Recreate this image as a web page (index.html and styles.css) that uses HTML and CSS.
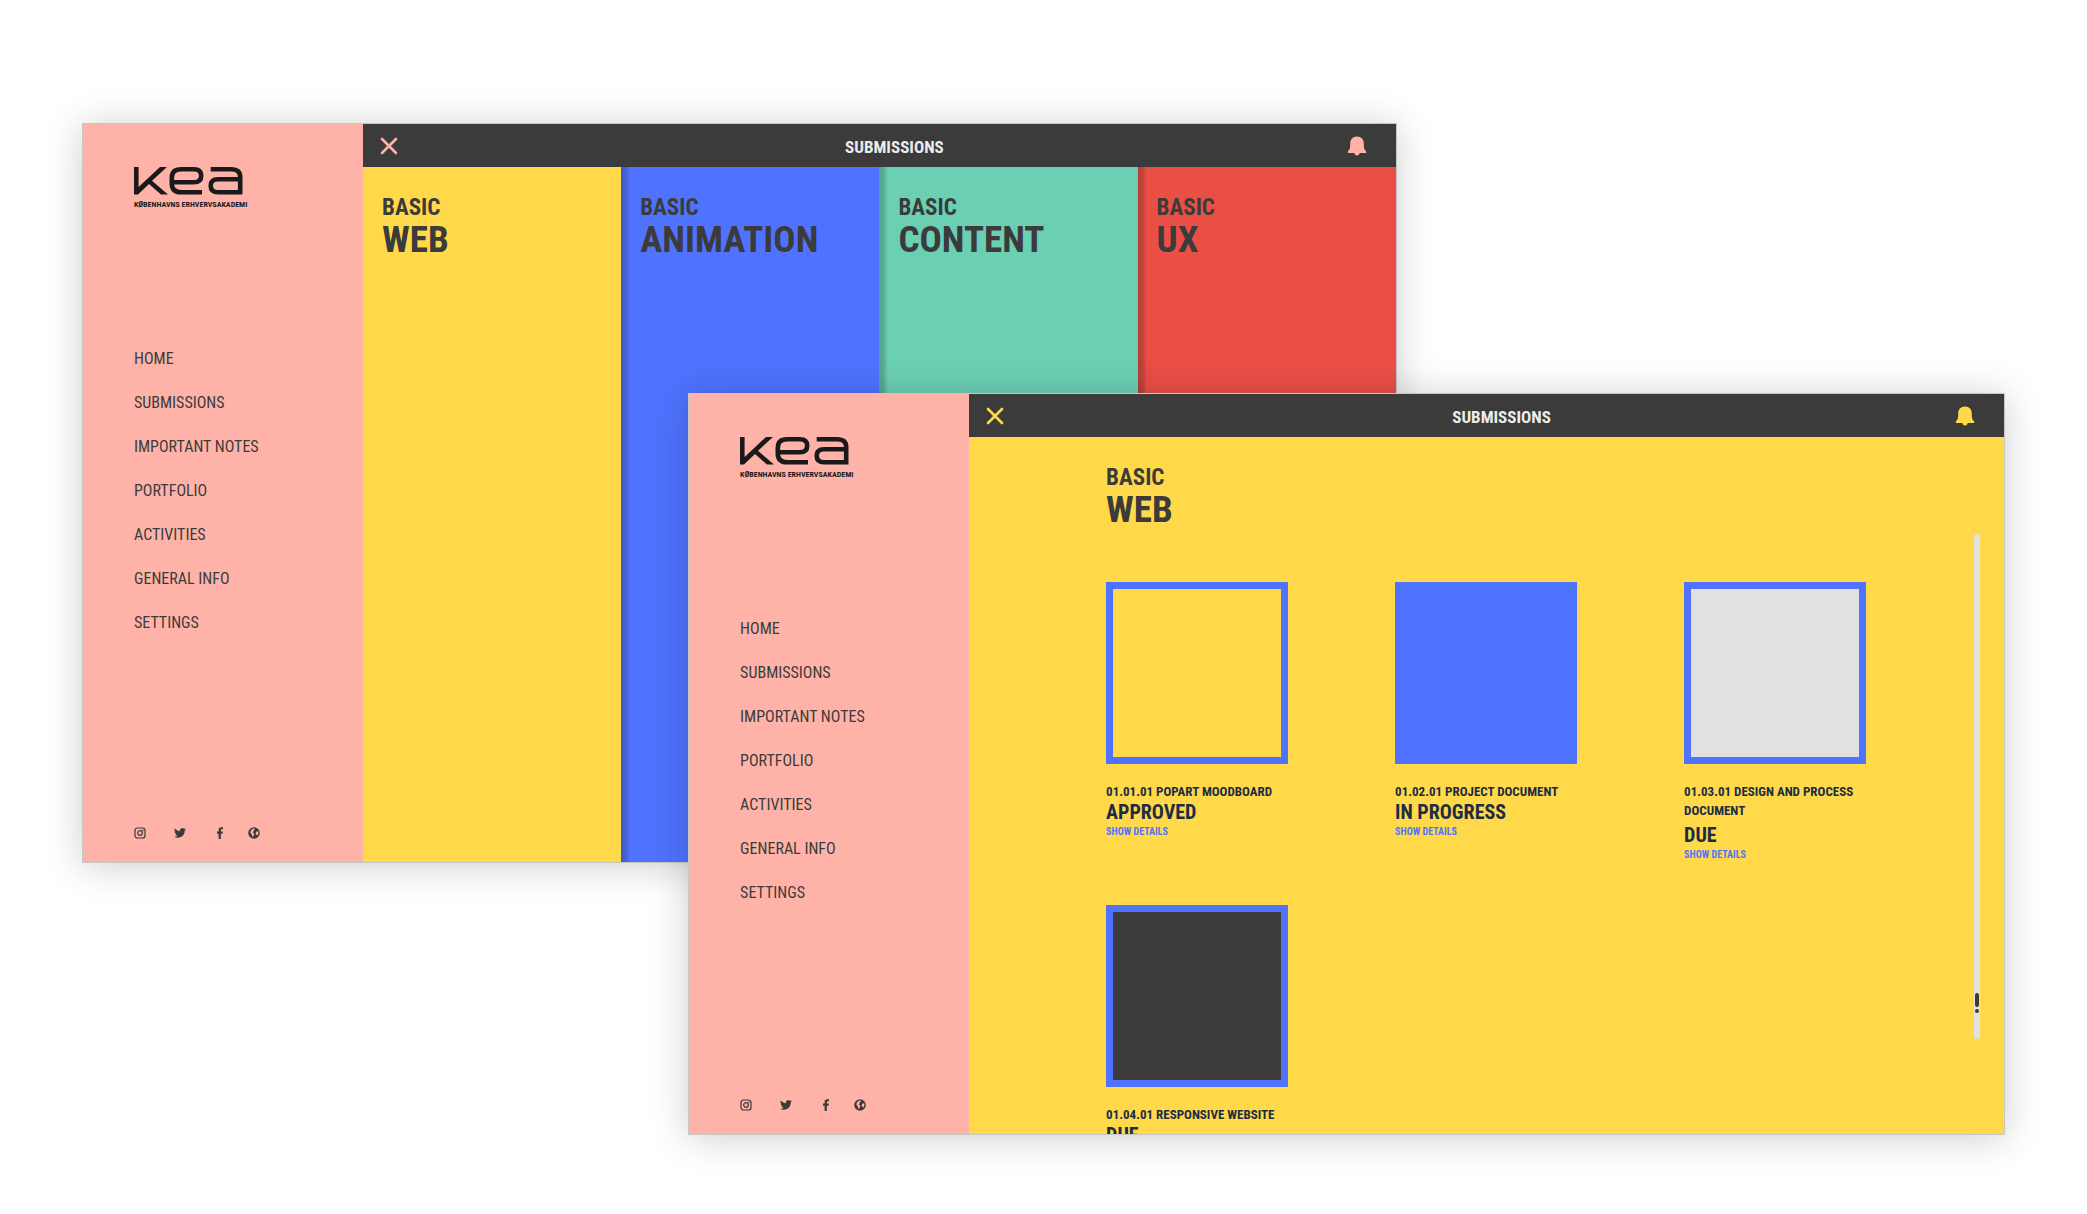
FILE: index.html
```html
<!DOCTYPE html>
<html lang="en">
<head>
<meta charset="utf-8">
<title>KEA Submissions</title>
<link rel="stylesheet" href="styles.css">
</head>
<body>
<svg class="defs" aria-hidden="true">
  <symbol id="logo" viewBox="0 0 109 28">
    <path d="M0 0H4.6V20L26 0H33L18 13.8L34 27.6H27L15 17L4 27.6H0Z"/>
    <path class="logo-line" d="M68 25.3H47Q37.8 25.3 37.8 16.5V11Q37.8 2.3 47 2.3H60Q67.2 2.3 67.2 8.8Q67.2 15.3 60 15.3H38M76.7 2.3H97Q106.2 2.3 106.2 10V25.3H84Q76.7 25.3 76.7 18.8Q76.7 12.3 84 12.3H106"/>
  </symbol>
  <symbol id="close" viewBox="0 0 18 18"><path class="close-line" d="M2 2L16 16M16 2L2 16"/></symbol>
  <symbol id="bell" viewBox="0 0 20 20"><path d="M10 0.5C5.6 0.5 3.2 3.6 3.2 7.6C3.2 12.4 2.6 13.8 0.8 15.6V17H7.4C7.6 18.8 8.6 19.4 10 19.4S12.4 18.8 12.6 17H19.2V15.6C17.4 13.8 16.8 12.4 16.8 7.6C16.8 3.6 14.4 0.5 10 0.5Z"/></symbol>
  <symbol id="instagram" viewBox="0 0 12 12"><g class="thin-line"><rect x="1" y="1" width="10" height="10" rx="2.6"/><circle cx="6" cy="6" r="2.3"/></g><circle cx="8.9" cy="3.2" r="0.7"/></symbol>
  <symbol id="twitter" viewBox="0 0 24 24"><path d="M23.9 4.6a10 10 0 0 1-2.8.8 5 5 0 0 0 2.2-2.7c-1 .5-2 1-3.1 1.2a4.9 4.9 0 0 0-8.4 4.5C7.700 8.100 4.100 6.100 1.700 3.100a4.900 4.900 0 0 0 1.500 6.600c-.8 0-1.600-.2-2.200-.6v.1a4.900 4.900 0 0 0 3.900 4.800 5 5 0 0 1-2.200.1 4.900 4.900 0 0 0 4.600 3.400A9.900 9.900 0 0 1 0 19.500a14 14 0 0 0 7.500 2.200c9.100 0 14-7.500 14-14v-.6a10 10 0 0 0 2.400-2.500z"/></symbol>
  <symbol id="facebook" viewBox="0 0 12 24"><path d="M3.200 24V13.400H0V9.200H3.200V6.100C3.200 2.300 5.400 0.500 8.600 0.500C10 0.500 11.300 0.600 12 0.700V4.300H9.600C8 4.300 7.700 5.100 7.700 6.300V9.200H11.700L11.100 13.400H7.700V24Z"/></symbol>
  <symbol id="globe" viewBox="0 0 12 12"><path fill-rule="evenodd" d="M6 0.200A5.800 5.800 0 1 0 6 11.800A5.800 5.800 0 1 0 6 0.200ZM5 1.600L7.200 1.700L6 3.100L5.600 4.400L4.400 5L5.600 6L6.400 7.400L5.400 8.600L5.200 10.300L4.200 9.200L3.800 7.200L2.400 5.800L2.600 4ZM8.200 4.800L10.200 4.300C10.600 5.800 10.300 7.400 9.400 8.600L8.400 7.800L7.600 6.200Z"/></symbol>
</svg>

<main class="stage">
  <section class="window window-back" aria-label="Submissions overview">
    <aside class="sidebar">
      <div class="brand">
        <svg class="brand-mark" role="img" aria-label="kea"><use href="#logo"/></svg>
        <p class="brand-name">KØBENHAVNS ERHVERVSAKADEMI</p>
      </div>
      <nav class="menu">
        <a href="#">HOME</a>
        <a href="#">SUBMISSIONS</a>
        <a href="#">IMPORTANT NOTES</a>
        <a href="#">PORTFOLIO</a>
        <a href="#">ACTIVITIES</a>
        <a href="#">GENERAL INFO</a>
        <a href="#">SETTINGS</a>
      </nav>
      <div class="social">
        <a href="#" aria-label="Instagram"><svg><use href="#instagram"/></svg></a>
        <a href="#" aria-label="Twitter"><svg><use href="#twitter"/></svg></a>
        <a href="#" aria-label="Facebook"><svg><use href="#facebook"/></svg></a>
        <a href="#" aria-label="Website"><svg><use href="#globe"/></svg></a>
      </div>
    </aside>
    <div class="panel">
      <header class="topbar topbar-pink">
        <button type="button" aria-label="Close"><svg class="close-icon"><use href="#close"/></svg></button>
        <h1>SUBMISSIONS</h1>
        <button type="button" aria-label="Notifications"><svg class="bell-icon"><use href="#bell"/></svg></button>
      </header>
      <div class="subjects">
        <a class="subject yellow" href="#"><span class="level">BASIC</span><span class="topic">WEB</span></a>
        <a class="subject blue" href="#"><span class="level">BASIC</span><span class="topic">ANIMATION</span></a>
        <a class="subject green" href="#"><span class="level">BASIC</span><span class="topic">CONTENT</span></a>
        <a class="subject red" href="#"><span class="level">BASIC</span><span class="topic">UX</span></a>
      </div>
    </div>
  </section>

  <section class="window window-front" aria-label="Basic web submissions">
    <aside class="sidebar">
      <div class="brand">
        <svg class="brand-mark" role="img" aria-label="kea"><use href="#logo"/></svg>
        <p class="brand-name">KØBENHAVNS ERHVERVSAKADEMI</p>
      </div>
      <nav class="menu">
        <a href="#">HOME</a>
        <a href="#">SUBMISSIONS</a>
        <a href="#">IMPORTANT NOTES</a>
        <a href="#">PORTFOLIO</a>
        <a href="#">ACTIVITIES</a>
        <a href="#">GENERAL INFO</a>
        <a href="#">SETTINGS</a>
      </nav>
      <div class="social">
        <a href="#" aria-label="Instagram"><svg><use href="#instagram"/></svg></a>
        <a href="#" aria-label="Twitter"><svg><use href="#twitter"/></svg></a>
        <a href="#" aria-label="Facebook"><svg><use href="#facebook"/></svg></a>
        <a href="#" aria-label="Website"><svg><use href="#globe"/></svg></a>
      </div>
    </aside>
    <div class="panel">
      <header class="topbar topbar-yellow">
        <button type="button" aria-label="Close"><svg class="close-icon"><use href="#close"/></svg></button>
        <h1>SUBMISSIONS</h1>
        <button type="button" aria-label="Notifications"><svg class="bell-icon"><use href="#bell"/></svg></button>
      </header>
      <div class="work">
        <h2 class="heading"><span class="level">BASIC</span><span class="topic">WEB</span></h2>
        <div class="cards">
          <article class="card">
            <div class="thumb approved"></div>
            <h3>01.01.01 POPART MOODBOARD</h3>
            <p class="status">APPROVED</p>
            <a href="#">SHOW DETAILS</a>
          </article>
          <article class="card">
            <div class="thumb progress"></div>
            <h3>01.02.01 PROJECT DOCUMENT</h3>
            <p class="status">IN PROGRESS</p>
            <a href="#">SHOW DETAILS</a>
          </article>
          <article class="card">
            <div class="thumb due"></div>
            <h3 class="long-title">01.03.01 DESIGN AND PROCESS DOCUMENT</h3>
            <p class="status">DUE</p>
            <a href="#">SHOW DETAILS</a>
          </article>
          <article class="card">
            <div class="thumb late"></div>
            <h3>01.04.01 RESPONSIVE WEBSITE</h3>
            <p class="status">DUE</p>
          </article>
        </div>
        <div class="track"><span class="track-bar"></span><span class="track-dot"></span></div>
      </div>
    </div>
  </section>
</main>
</body>
</html>
```
FILE: styles.css
```css
:root {
  --pink: #ffb3a8;
  --yellow: #ffd94a;
  --blue: #4f73ff;
  --green: #6bd0b3;
  --red: #e94f45;
  --dark: #3b3b3b;
  --navy: #1b2c44;
  --grey: #e1e1e1;
}

* { box-sizing: border-box; }

body {
  margin: 0;
  background: #fff;
  color: var(--dark);
  font-family: "Roboto Condensed", "Liberation Sans Narrow", Roboto, sans-serif;
}

h1, h2, h3, p { margin: 0; }
a { color: inherit; text-decoration: none; }
svg { display: block; fill: currentColor; }

.defs { position: absolute; width: 0; height: 0; }

.logo-line { fill: none; stroke: currentColor; stroke-width: 4.6; }
.close-line { fill: none; stroke: currentColor; stroke-width: 2.6; stroke-linecap: round; }
.thin-line { fill: none; stroke: currentColor; stroke-width: 1.2; }

.stage { position: relative; min-height: 1214px; }

.window {
  position: absolute;
  display: grid;
  grid-template-columns: 280px 1fr;
  border: 1px solid #c6c6c6;
  box-shadow: 0 3px 36px rgba(0, 0, 0, 0.2);
}
.window-back { top: 123px; left: 82px; width: 63%; height: 740px; }
.window-front { top: 393px; right: 82px; width: 63.1%; height: 742px; }

.sidebar {
  display: flex;
  flex-direction: column;
  padding: 43px 24px 23px 51px;
  background: var(--pink);
}

.brand { color: #1a1a1a; }
.brand-mark { width: 109px; height: 28px; }
.brand-name { margin-top: 4px; font-size: 8px; line-height: 12px; font-weight: 700; white-space: nowrap; }

.menu {
  display: flex;
  flex-direction: column;
  gap: 24px;
  margin-top: 138px;
  font-size: 16px;
  line-height: 20px;
}

.social { display: flex; align-items: center; margin-top: auto; }
.social svg { width: 12px; height: 12px; }
.social a + a { margin-left: 28px; }
.social a:last-child { margin-left: 22px; }

.panel { display: flex; flex-direction: column; min-width: 0; min-height: 0; }

.topbar {
  display: flex;
  align-items: center;
  height: 43px;
  padding: 0 29px 0 17px;
  background: var(--dark);
}
.topbar-pink { color: var(--pink); }
.topbar-yellow { color: var(--yellow); }
.topbar button { padding: 0; border: 0; background: none; color: inherit; }
.topbar h1 {
  flex: 1;
  padding: 3px 0 0 44px;
  color: #ececec;
  font-size: 17px;
  line-height: 24px;
  text-align: center;
}
.close-icon { width: 18px; height: 18px; }
.bell-icon { width: 20px; height: 20px; }

.subjects { flex: 1; display: grid; grid-template-columns: repeat(4, 1fr); }
.subject { padding: 26px 0 0 19px; }
.subject + .subject { background-image: linear-gradient(to right, rgba(0, 0, 0, 0.22), rgba(0, 0, 0, 0.16) 5px, transparent 9px); }
.yellow { background-color: var(--yellow); }
.blue { background-color: var(--blue); }
.green { background-color: var(--green); }
.red { background-color: var(--red); }

.level, .topic { display: block; font-weight: 700; }
.level { font-size: 23px; line-height: 30px; }
.topic { font-size: 37px; line-height: 34px; }

.work {
  flex: 1;
  position: relative;
  min-height: 0;
  overflow: hidden;
  padding: 26px 0 0 137px;
  background: var(--yellow);
}

.cards {
  display: grid;
  grid-template-columns: repeat(3, 182px);
  column-gap: 107px;
  row-gap: 42px;
  margin-top: 55px;
  color: var(--navy);
}
.thumb { height: 182px; border: 7px solid var(--blue); }
.progress { background: var(--blue); }
.due { background: var(--grey); }
.late { background: var(--dark); }
.card h3 { margin-top: 18px; font-size: 13px; line-height: 19px; }
.card .long-title { padding-bottom: 4px; }
.status { font-size: 20px; line-height: 23px; font-weight: 700; }
.card a { display: block; color: var(--blue); font-size: 10px; line-height: 16px; font-weight: 700; }

.track {
  position: absolute;
  top: 97px;
  right: 24px;
  width: 6px;
  height: 505px;
  border-radius: 3px;
  background: var(--grey);
}
.track-bar, .track-dot { position: absolute; left: 1px; width: 4px; border-radius: 2px; background: var(--dark); }
.track-bar { bottom: 32px; height: 14px; }
.track-dot { bottom: 26px; height: 4px; }
```
